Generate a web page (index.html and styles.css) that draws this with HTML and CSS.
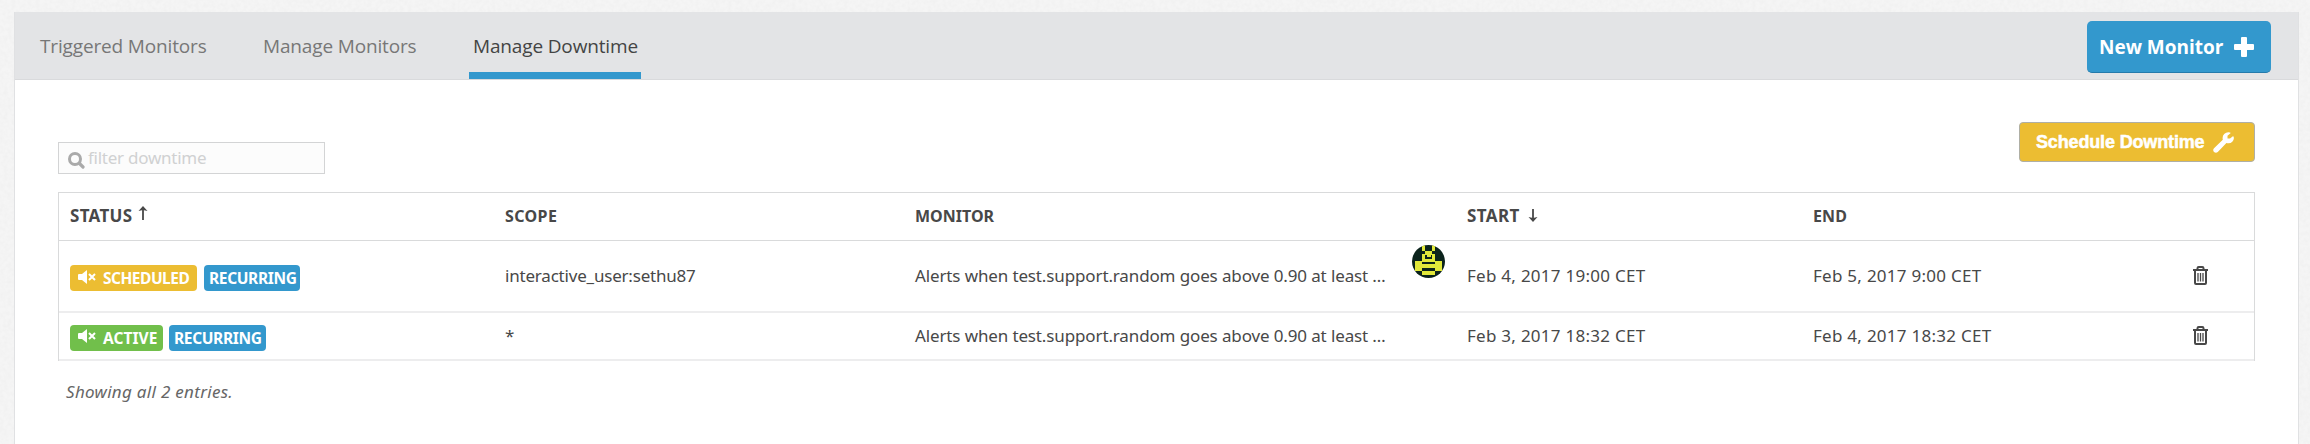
FILE: index.html
```html
<!DOCTYPE html>
<html lang="en">
<head>
<meta charset="utf-8">
<title>Manage Downtime</title>
<link rel="stylesheet" href="styles.css">
</head>
<body>
<svg class="defs" width="0" height="0">
  <symbol id="mute" viewBox="0 0 18 14">
    <path fill="#fff" d="M1 4h3l5-4v14L4 10H1Q0 10 0 9V5Q0 4 1 4Z"/>
    <path stroke="#fff" stroke-width="2" fill="none" d="M11 4l6 6M17 4l-6 6"/>
  </symbol>
  <symbol id="trash" viewBox="0 0 15 19">
    <path fill="none" stroke="#484848" stroke-width="2" d="M0 4h15M4.500 3.500V2.200Q4.500 1 5.700 1h3.600Q10.500 1 10.500 2.200V3.500M2 4.500V17Q2 18 3 18h9Q13 18 13 17V4.500"/>
    <path fill="none" stroke="#484848" stroke-width="1.300" d="M5 7v8.500M7.500 7v8.500M10 7v8.500"/>
  </symbol>
</svg>
<svg class="texture" width="2310" height="444">
  <filter id="paper" x="0" y="0" width="100%" height="100%"><feTurbulence type="fractalNoise" baseFrequency=".25" numOctaves="2" seed="4"/><feColorMatrix values="0 0 0 0 .55  0 0 0 0 .55  0 0 0 0 .55  .16 0 0 0 -.05"/></filter>
  <rect width="2310" height="444" filter="url(#paper)"/>
</svg>
<main class="panel">
  <nav class="tabs">
    <a class="tab t1">Triggered Monitors</a>
    <a class="tab t2">Manage Monitors</a>
    <a class="tab t3 active">Manage Downtime</a>
    <button class="new"><span>New Monitor</span><svg width="20" height="20" viewBox="0 0 20 20"><path fill="#fff" d="M8 0h4q1 0 1 1v6h6q1 0 1 1v4q0 1-1 1h-6v6q0 1-1 1H8q-1 0-1-1v-6H1q-1 0-1-1V8q0-1 1-1h6V1q0-1 1-1Z"/></svg></button>
  </nav>
  <div class="toolbar">
    <div class="filter"><svg width="17" height="17" viewBox="0 0 17 17"><circle cx="7" cy="7" r="5.500" fill="none" stroke="#aaa" stroke-width="3"/><path stroke="#aaa" stroke-width="3.200" stroke-linecap="round" d="M11.500 11.500l3.500 3.500"/></svg><span>filter downtime</span></div>
    <button class="schedule"><span>Schedule Downtime</span><svg width="21" height="21" viewBox="0 0 21 21"><path fill="#fff" d="M20.800 5.500Q21.200 8 19.300 9.800Q17 12 13.400 11L4.800 20Q3 21.500 1 20Q-.6 18 1 16.200L9.800 7.800Q9 4.200 11.200 2Q13.500-.3 17 .5Q18 .9 17.200 1.500L14.500 3.800V6.500H17L19.600 4.400Q20.600 4 20.800 5.500Z"/></svg></button>
  </div>
  <section class="table">
    <div class="row head">
      <div><span class="h1">STATUS</span><svg class="up" width="10" height="14" viewBox="0 0 10 14"><path fill="none" stroke="#484848" stroke-width="1.800" d="M5 2v12"/><path fill="#484848" d="M5 0l4.500 5-4.500-1-4.500 1Z"/></svg></div>
      <div><span class="h2">SCOPE</span></div>
      <div><span class="h3">MONITOR</span></div>
      <div><span class="h4">START</span><svg class="down" width="10" height="13" viewBox="0 0 10 13"><path fill="none" stroke="#484848" stroke-width="1.800" d="M5 0v11"/><path fill="#484848" d="M5 13l4.500-5-4.500 1-4.500-1Z"/></svg></div>
      <div><span class="h5">END</span></div>
      <div></div>
    </div>
    <div class="row first">
      <div class="badges"><span class="badge yellow"><svg width="18" height="14"><use href="#mute"/></svg><b>SCHEDULED</b></span><span class="badge blue"><b>RECURRING</b></span></div>
      <div><span class="scope">interactive_user:sethu87</span></div>
      <div><span class="mon">Alerts when test.support.random goes above 0.90 at least …</span>
        <svg class="avatar" width="33" height="33" viewBox="0 0 33 33"><defs><clipPath id="round"><circle cx="16.500" cy="16.500" r="16.500"/></clipPath></defs><g clip-path="url(#round)"><path fill="#0b231c" d="M0 0h33v33H0Z"/><path fill="#e1e83a" d="M10 0h3v6h7V0h3v6h-3v3h3v7h7v10h-7v4H10v-4H3V16h7V9h3V6h-3Z"/><path fill="#0b231c" d="M13 10h2v2h4v-2h1v4h-7ZM10 17h13v2H10ZM10 23h13v3H10Z"/></g></svg></div>
      <div><span class="date">Feb 4, 2017 19:00 CET</span></div>
      <div><span class="date">Feb 5, 2017 9:00 CET</span></div>
      <div class="del"><svg width="15" height="19"><use href="#trash"/></svg></div>
    </div>
    <div class="row second">
      <div class="badges"><span class="badge green"><svg width="18" height="14"><use href="#mute"/></svg><b>ACTIVE</b></span><span class="badge blue"><b>RECURRING</b></span></div>
      <div><span class="scope">*</span></div>
      <div><span class="mon">Alerts when test.support.random goes above 0.90 at least …</span></div>
      <div><span class="date">Feb 3, 2017 18:32 CET</span></div>
      <div><span class="date">Feb 4, 2017 18:32 CET</span></div>
      <div class="del"><svg width="15" height="19"><use href="#trash"/></svg></div>
    </div>
  </section>
  <p class="count">Showing all 2 entries.</p>
</main>
</body>
</html>
```
FILE: styles.css
```css
* { box-sizing: border-box; }
body { margin: 0; height: 444px; overflow: hidden; padding: 12px 11px 0 14px; background: #f5f5f5; color: #484848; font-family: "Noto Sans", "Open Sans", sans-serif; font-size: 17px; }
.defs { position: absolute; }
.texture { position: absolute; left: 0; top: 0; z-index: -1; }
svg { display: block; flex: none; }
button { border: 0; padding: 0; margin: 0; }
.panel { height: 432px; background: #fff; border: 1px solid #e0e1e3; border-width: 0 1px; }
.tabs { height: 68px; display: flex; background: #e3e4e6; border-bottom: 1px solid #d9dadc; padding-left: 21px; }
.tab { height: 67px; line-height: 66px; padding: 1px 4px 0; font-family: "Open Sans", sans-serif; font-size: 19px; letter-spacing: -.15px; color: #777; white-space: nowrap; }
.tab + .tab { margin-left: 49px; }
.tab.active { color: #444; border-bottom: 7px solid #3398cd; }
.t1 { width: 174px; }
.t2 { width: 161px; }
.t3 { width: 172px; }
.new { width: 184px; height: 52px; margin: 9px 27px 0 auto; padding: 0 17px 0 12px; display: flex; align-items: center; justify-content: space-between; border-radius: 5px; border-bottom: 1px solid #247aab; background: #3398cd; color: #fff; font: bold 19px "Open Sans", sans-serif; }
.new span { padding-top: 1px; }
.toolbar { height: 112px; padding: 42px 43px 0; display: flex; justify-content: space-between; align-items: flex-start; }
.filter { width: 267px; height: 32px; margin-top: 20px; padding: 0 0 0 9px; display: flex; align-items: center; gap: 3px; background: #fcfcfc; border: 1px solid #d3d4d5; color: #d0d1d2; line-height: 28px; letter-spacing: -.25px; }
.filter svg { margin-top: 5px; }
.filter span { margin-top: -1px; }
.schedule { width: 236px; height: 40px; padding: 0 20px 0 16px; display: flex; align-items: center; justify-content: space-between; border: 1px solid #afafa5; border-radius: 4px; background: #ecbd32; color: #fff; font: bold 18px "Liberation Sans", Arial, sans-serif; letter-spacing: -.15px; -webkit-text-stroke: .5px #fff; }
.table { margin: 0 43px; border: 1px solid #d9dadb; border-bottom: 0; }
.row { display: grid; grid-template-columns: 435px 410px 552px 346px 380px 1fr; padding-left: 11px; white-space: nowrap; }
.row > div { display: flex; position: relative; align-items: center; }
.head { height: 48px; padding-bottom: 2px; border-bottom: 1px solid #d9dadb; font-weight: bold; font-size: 16px; }
.h1 { font-size: 17px; letter-spacing: .3px; }
.h2 { letter-spacing: .4px; }
.h4 { font-size: 17px; letter-spacing: .4px; }
.h5 { letter-spacing: .1px; }
.up { margin: -6px 0 0 6px; }
.down { margin: 0 0 0 8px; }
.first { height: 72px; border-bottom: 2px solid #ededee; }
.second { height: 48px; border-bottom: 2px solid #ededee; }
.first > div:not(.badges), .second > div:not(.badges) { padding-bottom: 1px; }
.row > .del { padding-bottom: 2px; }
.scope { letter-spacing: -.2px; }
.mon { letter-spacing: -.13px; }
.date { letter-spacing: .27px; }
.badges { gap: 7px; }
.badge { height: 26px; display: flex; align-items: center; padding: 0 5px; border-radius: 4px; color: #fff; font-size: 16px; margin-top: 4px; }
.badge svg { margin: -3px 7px 0 3px; }
.badge b { font-size: 15.500px; letter-spacing: -.35px; }
.second .badge { margin-top: 3px; }
.green + .blue { margin-left: -1px; }
.yellow { background: #ecbd32; width: 127px; }
.yellow b { letter-spacing: -.5px; }
.green { background: #71bf4b; width: 93px; }
.green b { letter-spacing: .05px; }
.blue { background: #3398cd; width: 96px; }
.second .blue { width: 97px; }
.avatar { position: absolute; left: 497px; top: 4px; }
.count { margin: 20px 51px 0; font-style: italic; color: #666; font-size: 17px; letter-spacing: .3px; line-height: 22px; }
```
